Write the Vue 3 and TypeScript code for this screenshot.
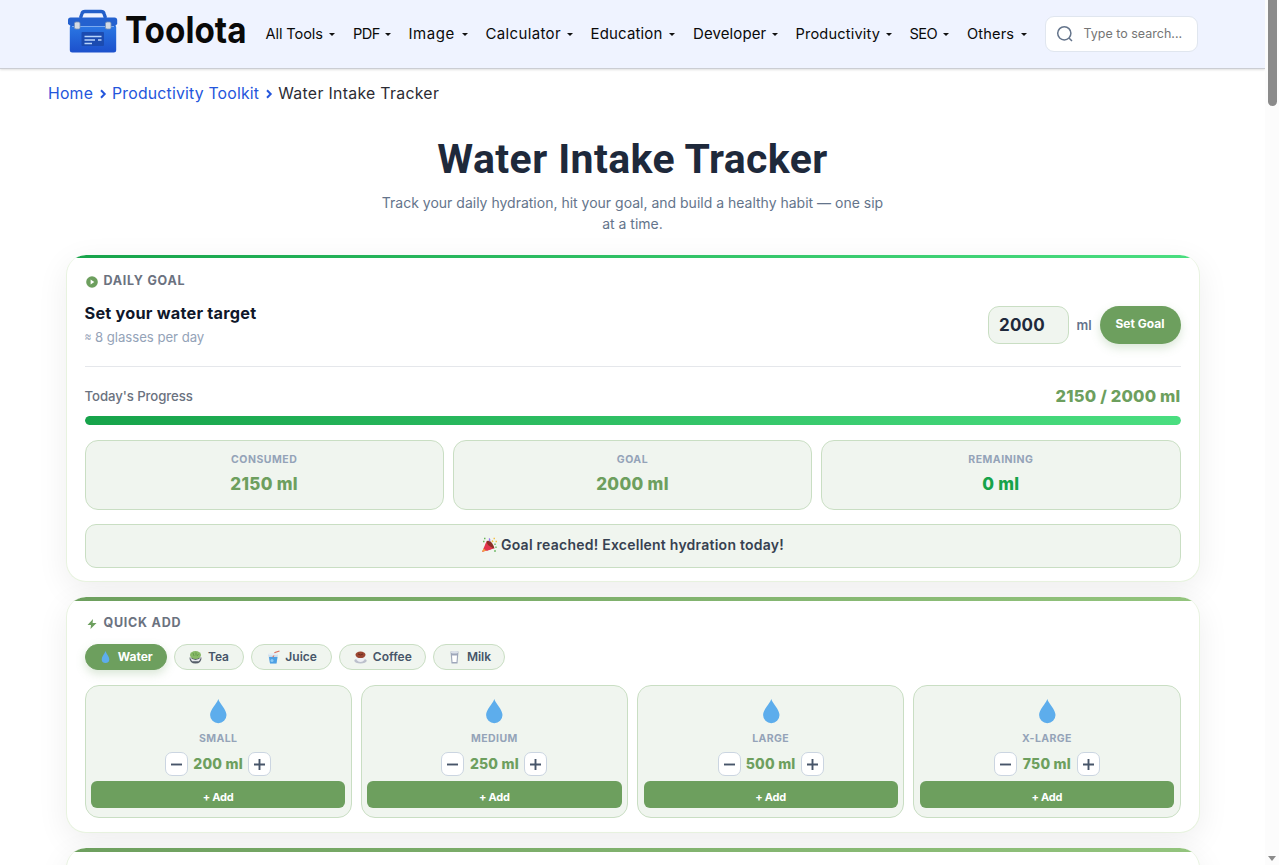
<script setup lang="ts">
import { ref, computed } from 'vue'

interface Drink { id: string; label: string }
interface Size { label: string; amount: number }

const menus = ['All Tools', 'PDF', 'Image', 'Calculator', 'Education', 'Developer', 'Productivity', 'SEO', 'Others']
const drinks: Drink[] = [
  { id: 'water', label: 'Water' },
  { id: 'tea', label: 'Tea' },
  { id: 'juice', label: 'Juice' },
  { id: 'coffee', label: 'Coffee' },
  { id: 'milk', label: 'Milk' },
]
const sizes = ref<Size[]>([
  { label: 'SMALL', amount: 200 },
  { label: 'MEDIUM', amount: 250 },
  { label: 'LARGE', amount: 500 },
  { label: 'X-LARGE', amount: 750 },
])
const active = ref('water')
const goal = ref(2000)
const draft = ref('2000')
const consumed = ref(2150)
const remaining = computed(() => Math.max(0, goal.value - consumed.value))
const percent = computed(() => Math.min(100, (consumed.value / goal.value) * 100))

function setGoal(): void {
  const n = Number(draft.value)
  if (n > 0) goal.value = n
}
function step(size: Size, delta: number): void {
  size.amount = Math.max(50, size.amount + delta)
}
</script>

<template>
  <div class="window">
    <div class="page">
      <header class="topbar">
        <svg class="logo" width="180" height="50" viewBox="0 -2 180 50">
          <defs>
            <linearGradient id="box" x1="0" y1="0" x2="0" y2="1">
              <stop offset="0" stop-color="#2b78e4" />
              <stop offset="1" stop-color="#1c50cc" />
            </linearGradient>
          </defs>
          <path d="M12.500 10 14 5.500Q14.600 3.500 17 3.500H33Q35.400 3.500 36 5.500L37.500 10" fill="none" stroke="#235fc9" stroke-width="3.400" />
          <rect x="1.800" y="17" width="46.400" height="27.500" rx="2.500" fill="url(#box)" />
          <path d="M2.500 9.500H46.500Q49.200 9.500 49.200 12V16L46 19H4L0 16V12Q0 9.500 2.500 9.500Z" fill="#2461cf" />
          <path d="M4 18.500H46" stroke="#7aaaf0" stroke-width="1" />
          <rect x="13.500" y="24" width="22.500" height="14" rx="1" fill="#1b4bb0" />
          <path d="M16.500 28.500H33.500M16.500 32H27M30 32H33.500M16.500 35.500H24" stroke="#b9d5fb" stroke-width="1.400" />
          <rect x="6.500" y="14" width="5.500" height="7" rx="1.500" fill="#d5dce5" stroke="#7990b2" stroke-width=".8" />
          <rect x="37.500" y="14" width="5.500" height="7" rx="1.500" fill="#d5dce5" stroke="#7990b2" stroke-width=".8" />
          <text class="wordmark" x="57" y="35" textLength="121.500" lengthAdjust="spacingAndGlyphs">Toolota</text>
        </svg>
        <nav class="menu">
          <a v-for="m in menus" :key="m" class="menu-item"><span>{{ m }}</span><i class="caret"></i></a>
        </nav>
        <div class="search">
          <svg width="18" height="18" viewBox="0 0 18 18" fill="none" stroke="#64748b" stroke-width="1.500">
            <circle cx="8.300" cy="8.300" r="6.600" /><path d="M13 13 16 16" />
          </svg>
          <span>Type to search...</span>
        </div>
      </header>

      <div class="crumbs">
        <a>Home</a>
        <svg class="chev" width="8" height="10" viewBox="0 0 8 10"><path d="M2 1.300 5.700 5 2 8.700" /></svg>
        <a>Productivity Toolkit</a>
        <svg class="chev" width="8" height="10" viewBox="0 0 8 10"><path d="M2 1.300 5.700 5 2 8.700" /></svg>
        <span class="here">Water Intake Tracker</span>
      </div>

      <h1>Water Intake Tracker</h1>
      <p class="lead">Track your daily hydration, hit your goal, and build a healthy habit — one sip<br />at a time.</p>

      <section class="card goal-card">
        <h2>
          <svg width="12" height="12" viewBox="0 0 12 12"><circle cx="6" cy="6" r="5.800" fill="#6d9f5e" /><path d="M4.600 3.600 8.300 6 4.600 8.400Z" fill="#fff" /></svg>
          DAILY GOAL
        </h2>
        <div class="goal-row">
          <div>
            <div class="goal-title">Set your water target</div>
            <div class="goal-sub"><span class="approx">≈</span> 8 glasses per day</div>
          </div>
          <div class="goal-form">
            <input v-model="draft" />
            <span class="unit">ml</span>
            <button class="set" @click="setGoal">Set Goal</button>
          </div>
        </div>
        <div class="progress-head">
          <span class="today">Today's Progress</span>
          <span class="ratio">{{ consumed }} / {{ goal }} ml</span>
        </div>
        <div class="track"><div class="fill" :style="{ width: percent + '%' }"></div></div>
        <div class="stats">
          <div class="stat"><small>CONSUMED</small><b>{{ consumed }} ml</b></div>
          <div class="stat"><small>GOAL</small><b>{{ goal }} ml</b></div>
          <div class="stat"><small>REMAINING</small><b class="done">{{ remaining }} ml</b></div>
        </div>
        <div class="banner">
          <svg width="16" height="16" viewBox="0 0 16 16">
            <path d="M1 15 5.500 4.500 12 11.500Z" fill="#e2354d" />
            <path d="M1 15 2.500 11.500 5 13.500Z" fill="#f5a03c" />
            <path d="M5.500 4Q9 3 11 6T13.500 11.500Q9.500 12 7.500 9T5.500 4Z" fill="#8b3026" />
            <path d="M4.500 6.500 12.500 11.500 5.500 14Z" fill="#e2354d" />
            <path d="M8 4Q9.500 3 8 1.500" stroke="#9b7bf0" stroke-width="1.300" fill="none" />
            <path d="M3 1.500H4.500M2 4.500H3.500M14 6.500V8M15 9.500V11M14 13V15" stroke="#66b45c" stroke-width="1.300" />
            <path d="M12.500 1.500H14M14.500 4.500H16M11 3.500 12 5" stroke="#f2c14b" stroke-width="1.400" />
          </svg>
          <span>Goal reached! Excellent hydration today!</span>
        </div>
      </section>

      <section class="card add-card">
        <h2>
          <svg width="12" height="12" viewBox="0 0 12 12"><path d="M7 1 1.500 7H5L4.500 11 10.500 4.900H6.600Z" fill="#6d9f5e" /></svg>
          QUICK ADD
        </h2>
        <div class="pills">
          <button v-for="d in drinks" :key="d.id" class="pill" :class="[d.id, { active: active === d.id }]" @click="active = d.id">
            <svg width="13" height="14" viewBox="0 0 13 14">
              <path v-if="d.id === 'water'" d="M6.500 1C7.500 4 10.300 6.500 10.300 9.300A3.700 3.700 0 0 1 2.700 9.300C2.700 6.500 5.500 4 6.500 1Z" fill="#5dadec" />
              <g v-else-if="d.id === 'tea'">
                <path d="M.500 7.500Q.500 13.500 6.500 13.500T12.500 7.500Z" fill="#555d68" />
                <path d="M.700 7Q6.500 13 12.300 7L10 11.200H3Z" fill="#e8eaed" />
                <ellipse cx="6.500" cy="5" rx="5.500" ry="4" fill="#87b967" />
                <path d="M4 3 5 6M7 2.500V5.500M9.500 4 8 6" stroke="#5e9448" stroke-width=".8" />
              </g>
              <g v-else-if="d.id === 'juice'">
                <path d="M1 4H11L9.500 13.500H3Z" fill="#cbdbe9" />
                <path d="M2 7H10.500L9.500 13.500H3Z" fill="#4da0e4" />
                <circle cx="5" cy="10.500" r="1.500" fill="#8bcbf7" />
                <path d="M6 7 8 2.500 12.500 1" stroke="#d9705f" stroke-width="1.200" fill="none" />
                <ellipse cx="6" cy="4.200" rx="5" ry="1.200" fill="#e5edf4" />
              </g>
              <g v-else-if="d.id === 'coffee'">
                <ellipse cx="6.500" cy="10.800" rx="6.200" ry="2.700" fill="#bcc0cc" />
                <path d="M1.500 5H11.500Q11.500 12 6.500 12T1.500 5Z" fill="#eef0f4" />
                <ellipse cx="6.500" cy="4.800" rx="5" ry="3.300" fill="#9b4631" />
                <path d="M4 4Q6.500 6 9 4" stroke="#6b2b20" fill="none" />
              </g>
              <g v-else>
                <path d="M2.500 1.500H10.500L9.500 13.500H3.500Z" fill="#9ea7ba" />
                <path d="M4 5.500H9L8.500 12H4.500Z" fill="#fff" />
                <ellipse cx="6.500" cy="2.300" rx="3.700" ry="1.200" fill="#dbe1ea" />
              </g>
            </svg>
            <span>{{ d.label }}</span>
          </button>
        </div>
        <div class="sizes">
          <div v-for="s in sizes" :key="s.label" class="size">
            <svg class="drop" width="18" height="26" viewBox="0 0 18 26"><path d="M9.300 1C10.800 6 17.500 11.500 17.500 17A8.200 8.200 0 0 1 1.100 17C1.100 11.500 7.800 6 9.300 1Z" fill="#5dadec" /></svg>
            <small>{{ s.label }}</small>
            <div class="stepper">
              <button @click="step(s, -50)"><svg width="13" height="13" viewBox="0 0 13 13"><path d="M1 6.500H12" /></svg></button>
              <b>{{ s.amount }} ml</b>
              <button @click="step(s, 50)"><svg width="13" height="13" viewBox="0 0 13 13"><path d="M1 6.500H12M6.500 1V12" /></svg></button>
            </div>
            <button class="add" @click="consumed += s.amount">+ Add</button>
          </div>
        </div>
      </section>

      <section class="card next-card"></section>
    </div>
    <aside class="scrollbar">
      <div class="thumb"></div>
      <div class="arrow"></div>
    </aside>
  </div>
</template>

<style>
body { margin: 0; overflow: hidden; background: #fff; }
</style>

<style scoped>
* { box-sizing: border-box; }
.window { display: flex; width: 1279px; height: 865px; overflow: hidden; font-family: Inter, "Open Sans", sans-serif; background: #fff; }
.page { width: 1265px; flex: none; height: 865px; overflow: hidden; }
button, input { font-family: inherit; margin: 0; border: 0; padding: 0; }
.topbar { height: 69px; display: flex; background: #eff3ff; border-bottom: 1px solid #cbcdd3; box-shadow: 0 1px 2px rgba(0, 0, 0, .12); padding-left: 68px; }
.logo { margin-top: 6px; flex: none; overflow: visible; }
.wordmark { font: 700 37px Inter, sans-serif; fill: #090909; }
.menu { display: grid; grid-template-columns: 87.500px 55.500px 77px 105px 102.500px 102.500px 114px 57.500px 60px; margin-left: 17.500px; height: 68px; align-items: center; }
.menu-item { display: flex; justify-content: space-between; align-items: center; font-size: 14.600px; line-height: 20px; color: #0a0a0a; padding-right: 18px; white-space: nowrap; }
.menu-item:last-child { padding-right: 0; }
.menu-item:nth-child(1) { letter-spacing: -.1px; }
.menu-item:nth-child(2) { letter-spacing: -.6px; }
.menu-item:nth-child(3) { font-size: 15px; letter-spacing: .55px; }
.menu-item:nth-child(4) { font-size: 15px; letter-spacing: .35px; }
.menu-item:nth-child(5) { font-size: 15px; letter-spacing: .15px; }
.menu-item:nth-child(6) { font-size: 15px; letter-spacing: .1px; }
.menu-item:nth-child(7) { letter-spacing: .17px; }
.menu-item:nth-child(8) { letter-spacing: -.6px; }
.menu-item:nth-child(9) { letter-spacing: .15px; }
.caret { flex: none; border: 3px solid transparent; border-top: 3.500px solid #111; border-bottom: 0; margin-top: 1px; }
.search { margin: 16px 0 0 17.500px; width: 153px; height: 36px; border: 1px solid #e0e6ef; border-radius: 9px; background: #fff; display: flex; align-items: center; padding-left: 10px; gap: 10px; font-size: 12.500px; color: #757575; white-space: nowrap; }
.search span { padding-bottom: 1px; }
.crumbs { display: flex; align-items: center; height: 24px; margin: 12px 0 0 48px; font-size: 15.800px; letter-spacing: .2px; color: #2b2b33; }
.crumbs a { color: #2456dc; }
.crumbs .here { letter-spacing: .32px; }
.chev { margin: 2px 5px 0 6px; fill: none; stroke: #2456dc; stroke-width: 2; }
h1 { margin: 29px 0 0; text-align: center; font: 700 41px/50px Roboto, sans-serif; letter-spacing: .4px; color: #1e293b; }
.lead { margin: 8px 0 0; text-align: center; font-size: 14px; line-height: 21px; color: #64748b; }
.card { width: 1134px; margin: 0 0 15px 66px; border: 1px solid #e8f3e0; border-top: 0; border-radius: 20px; padding: 0 18.500px 0 17.500px; overflow: hidden; background: linear-gradient(90deg, #6d9f5e, #93c47d) top / 100% 4px no-repeat, #fff; box-shadow: 0 8px 32px rgba(0, 0, 0, .07); }
.goal-card { margin-top: 21px; height: 327px; background: linear-gradient(90deg, #16a34a, #4ade80) top / 100% 3px no-repeat, #fff; }
h2 { display: flex; align-items: center; gap: 6px; margin: 15px 0 1px 1px; height: 20px; font-size: 12.500px; font-weight: 700; letter-spacing: .75px; color: #6b7280; }
h2 svg { margin-top: 3px; }
.goal-row { height: 76px; display: flex; justify-content: space-between; border-bottom: 1px solid #e5e7eb; }
.goal-title { margin-top: 12px; font-size: 16.300px; line-height: 20px; font-weight: 700; letter-spacing: .22px; color: #0f172a; }
.goal-sub { margin-top: 5px; font-size: 13.200px; line-height: 19px; color: #94a3b8; letter-spacing: -.05px; }
.approx { font-size: 10.500px; position: relative; top: -2px; }
.goal-form { display: flex; align-items: center; height: 38px; margin-top: 15px; }
input { width: 81px; height: 38px; border: 1px solid #c9dec3; border-radius: 11px; background: #f0f5ef; padding-left: 10.500px; font-size: 17px; font-weight: 700; letter-spacing: .2px; color: #1e293b; }
.unit { width: 31px; padding-left: 8px; font-size: 13px; font-weight: 600; color: #64748b; }
.set { width: 81px; height: 38px; border-radius: 19px; background: #6d9f5e; color: #fff; font-size: 12px; font-weight: 700; padding-bottom: 3px; box-shadow: 0 4px 10px rgba(109, 159, 94, .25); }
.progress-head { display: flex; justify-content: space-between; align-items: center; height: 20px; margin-top: 19px; }
.today { font-size: 13.200px; font-weight: 500; letter-spacing: -.08px; color: #6b7280; }
.ratio { font-size: 16.500px; font-weight: 800; letter-spacing: .2px; color: #6d9f5e; }
.track { height: 9px; margin-top: 10px; border-radius: 5px; background: #e5e7eb; overflow: hidden; }
.fill { height: 9px; border-radius: 5px; background: linear-gradient(90deg, #16a34a, #4ade80); }
.stats { display: grid; grid-template-columns: repeat(3, 1fr); gap: 9px; margin-top: 15px; }
.stat { height: 70px; border: 1px solid #c9dec3; border-radius: 13px; background: #f0f5ef; display: flex; flex-direction: column; align-items: center; }
.stat small { margin-top: 11px; font-size: 10.500px; line-height: 16px; font-weight: 700; letter-spacing: .5px; color: #94a3b8; }
.stat b { margin-top: 6px; font-size: 17px; line-height: 20px; font-weight: 800; letter-spacing: .3px; color: #6d9f5e; }
.stat .done { color: #16a34a; }
.banner { height: 44px; margin-top: 14px; border: 1px solid #c9dec3; border-radius: 11px; background: #f0f5ef; display: flex; align-items: center; justify-content: center; gap: 4px; font-size: 14px; font-weight: 600; letter-spacing: .24px; color: #374151; padding-bottom: 3px; }
.add-card { height: 236px; }
.pills { display: flex; gap: 7.200px; margin-top: 12px; height: 26px; }
.pill { height: 26px; flex: none; border: 1px solid #c9dec3; border-radius: 13px; background: #f0f5ef; display: flex; align-items: center; justify-content: center; gap: 5.500px; font-size: 12px; font-weight: 600; color: #475569; padding-left: 1px; }
.pill span { padding-bottom: 2px; }
.pill.water { width: 82px; }
.pill.tea { width: 70px; }
.pill.juice { width: 81px; }
.pill.coffee { width: 87px; }
.pill.milk { width: 72px; }
.pill.active { background: #6d9f5e; border-color: #6d9f5e; color: #fff; font-weight: 700; box-shadow: 0 4px 10px rgba(109, 159, 94, .25); }
.sizes { display: grid; grid-template-columns: repeat(4, 1fr); gap: 9px; margin-top: 15px; }
.size { height: 133px; border: 1px solid #c9dec3; border-radius: 14px; background: #f0f5ef; display: flex; flex-direction: column; align-items: center; padding: 0 5.500px; }
.drop { margin-top: 12px; flex: none; }
.size small { margin-top: 7px; font-size: 10.500px; line-height: 16px; font-weight: 700; letter-spacing: .4px; color: #94a3b8; }
.stepper { display: flex; align-items: center; gap: 5px; margin-top: 5px; height: 24px; }
.stepper button { width: 23px; height: 24px; border: 1px solid #cbd5e1; border-radius: 7px; background: #fff; display: flex; align-items: center; justify-content: center; }
.stepper path { stroke: #475569; stroke-width: 1.900; }
.stepper b { width: 50px; text-align: center; white-space: nowrap; font-size: 14px; font-weight: 800; letter-spacing: .2px; color: #6d9f5e; padding-bottom: 2px; }
.add { width: 100%; height: 27px; margin-top: 5px; border-radius: 6px; background: #6d9f5e; color: #fff; font-size: 11px; font-weight: 700; letter-spacing: -.2px; padding-top: 4px; }
.next-card { height: 200px; }
.scrollbar { width: 14px; background: #fcfcfc; display: flex; flex-direction: column; justify-content: space-between; padding-left: 3px; height: 865px; }
.thumb { width: 9px; height: 106px; border-radius: 0 0 5px 5px; background: #8b8b8b; }
.arrow { border: 4.500px solid transparent; border-top: 5px solid #8b8b8b; border-bottom: 0; width: 0; margin-bottom: 4px; }
</style>
